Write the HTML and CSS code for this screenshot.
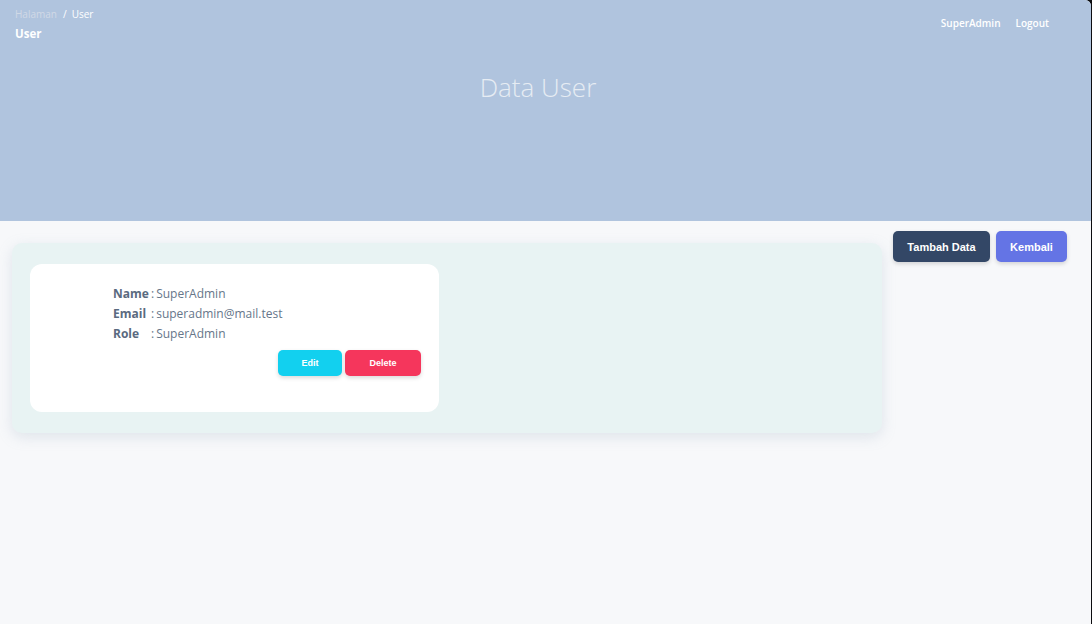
FILE: index.html
```html
<!DOCTYPE html>
<html lang="id">
<head>
<meta charset="utf-8">
<title>Data User</title>
<link rel="stylesheet" href="styles.css">
</head>
<body>
<div class="page">
  <header class="hero">
    <div class="topbar">
      <div class="crumbs">
        <div class="trail"><span class="muted">Halaman</span><span class="sep">/</span><span>User</span></div>
        <div class="current">User</div>
      </div>
      <nav class="usernav">
        <span>SuperAdmin</span>
        <span>Logout</span>
      </nav>
    </div>
    <h1 class="title">Data User</h1>
  </header>
  <main class="content">
    <section class="panel">
      <div class="card">
        <div class="info">
          <span class="lbl">Name</span><span class="val"><span class="colon">:</span>SuperAdmin</span>
          <span class="lbl">Email</span><span class="val"><span class="colon">:</span>superadmin@mail.test</span>
          <span class="lbl">Role</span><span class="val"><span class="colon">:</span>SuperAdmin</span>
        </div>
        <div class="actions">
          <button class="btn-sm edit">Edit</button>
          <button class="btn-sm del">Delete</button>
        </div>
      </div>
    </section>
    <div class="tools">
      <button class="btn dark">Tambah Data</button>
      <button class="btn indigo">Kembali</button>
    </div>
  </main>
</div>
</body>
</html>
```
FILE: styles.css
```css
* { box-sizing: border-box; }
html, body { margin: 0; height: 100%; }
body {
  background: #0d0d10;
  font-family: "Open Sans", "Noto Sans", sans-serif;
}
.page {
  width: 1091px;
  height: 624px;
  background: #f7f8fa;
  border-top-right-radius: 6px;
  overflow: hidden;
}
.hero {
  background: #b0c4de;
  height: 221px;
}
.topbar {
  display: flex;
  justify-content: space-between;
  padding: 6px 0 0 15px;
}
.trail {
  font-size: 10px;
  color: #fff;
  line-height: 16px;
}
.trail .muted { color: #d0d9e6; }
.trail .sep { margin: 0 5px 0 6px; }
.current {
  font-size: 11.5px;
  font-weight: 700;
  color: #fff;
  line-height: 18px;
  margin-top: 3px;
}
.usernav {
  display: flex;
  gap: 15px;
  padding: 10px 42px 0 0;
  font-size: 10px;
  font-weight: 600;
  color: #fff;
}
.title {
  margin: 26px 0 0;
  text-align: center;
  font-weight: 300;
  font-size: 26px;
  color: #e6ecf3;
  line-height: 36px;
  padding-right: 15px;
}
.content {
  display: flex;
  align-items: flex-start;
  padding: 10px 0 0 12px;
}
.panel {
  margin-top: 12px;
  width: 870px;
  height: 190px;
  background: #e8f3f3;
  border-radius: 10px;
  box-shadow: 0 4px 14px rgba(150, 170, 190, 0.25);
  padding: 21px 18px;
}
.card {
  width: 409px;
  height: 148px;
  background: #fff;
  border-radius: 12px;
  padding: 22px 18px 0 83px;
}
.info {
  display: grid;
  grid-template-columns: 38px auto;
  row-gap: 4px;
  font-size: 12px;
  line-height: 16px;
  color: #66768a;
  justify-content: start;
}
.lbl { font-weight: 700; color: #5a6a80; }
.colon { margin: 0 2px 0 0; }
.actions {
  display: flex;
  justify-content: flex-end;
  gap: 3px;
  margin-top: 8px;
}
.btn-sm {
  border: 0;
  border-radius: 5px;
  height: 26px;
  color: #fff;
  font-family: "Liberation Sans", Arial, sans-serif;
  font-size: 9px;
  font-weight: 700;
  box-shadow: 0 2px 4px rgba(0,0,0,0.15);
}
.edit { width: 64px; background: #12d0ef; }
.del { width: 76px; background: #f5365c; }
.tools {
  display: flex;
  gap: 6px;
  margin-left: 11px;
}
.btn {
  border: 0;
  border-radius: 5px;
  height: 31px;
  color: #fff;
  font-family: "Liberation Sans", Arial, sans-serif;
  font-size: 11px;
  font-weight: 700;
  box-shadow: 0 2px 4px rgba(0,0,0,0.15);
  padding: 0;
}
.dark { width: 97px; background: #334766; }
.indigo { width: 71px; background: #6474e5; }
```
